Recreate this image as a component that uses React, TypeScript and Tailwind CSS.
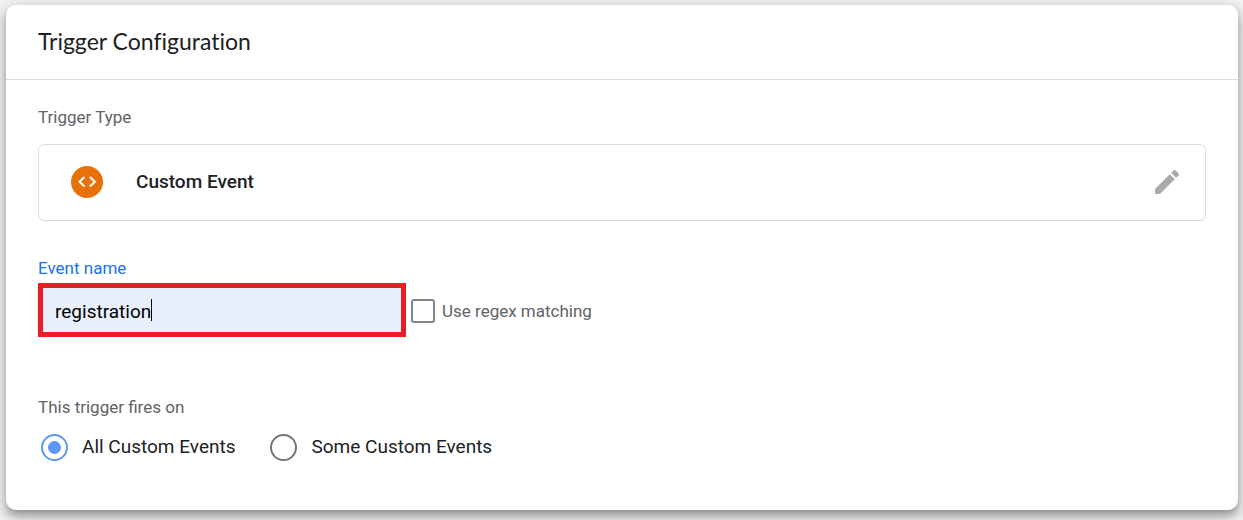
import React, { useState } from "react";

const CodeIcon: React.FC = () => (
  <svg viewBox="0 0 32 32" className="h-8 w-8 shrink-0" aria-hidden="true">
    <circle cx="16" cy="16" r="16" fill="#e8710a" />
    <path
      d="M13.5 11 8.5 15.8l5 4.8M18.9 11l5 4.8-5 4.8"
      fill="none"
      stroke="#fff"
      strokeWidth="2.1"
    />
  </svg>
);

const PencilIcon: React.FC = () => (
  <svg viewBox="3 3 18 18" className="h-6 w-6" fill="#aaaaaa" aria-hidden="true">
    <path d="M3 17.25V21h3.75L17.81 9.94l-3.75-3.75L3 17.25zM20.71 7.04a1 1 0 0 0 0-1.41l-2.34-2.34a1 1 0 0 0-1.41 0l-1.83 1.83 3.75 3.75 1.83-1.83z" />
  </svg>
);

const firingOptions = [
  { value: "all", label: "All Custom Events" },
  { value: "some", label: "Some Custom Events" },
];

const App: React.FC = () => {
  const [eventName, setEventName] = useState("registration");
  const [useRegex, setUseRegex] = useState(false);
  const [firesOn, setFiresOn] = useState("all");

  return (
    <div className="min-h-screen bg-[#f1f3f4] pt-[5px] pr-[5px] pb-[10px] pl-[6px] font-['Roboto',sans-serif] text-[#202124]">
      <main className="rounded-[10px] bg-white shadow-[0_5px_6px_-2px_rgba(0,0,0,0.2),0_8px_12px_1px_rgba(0,0,0,0.16),0_3px_14px_3px_rgba(0,0,0,0.14)]">
        <header className="border-b border-[#dadce0] px-8 pt-5 pb-[22px]">
          <h1 className="font-['Lato',sans-serif] text-[23px] leading-8 [font-variant-ligatures:none]">
            Trigger Configuration
          </h1>
        </header>

        <div className="px-8 pt-[25px] pb-[49px]">
          {/* Trigger type */}
          <h2 className="text-[17px] leading-6 text-[#5f6368]">Trigger Type</h2>
          <section className="mt-[15px] flex items-center rounded-md border border-[#dadce0] px-8 pt-[21px] pb-[22px]">
            <CodeIcon />
            <span className="ml-[33px] grow text-[19px] leading-8 font-medium">Custom Event</span>
            <button type="button" aria-label="Edit trigger type" className="-mr-[6px]">
              <PencilIcon />
            </button>
          </section>

          {/* Event name */}
          <label htmlFor="event-name" className="mt-[35px] block text-[17px] leading-6 text-[#1a73e8]">
            Event name
          </label>
          <div className="mt-[3px] flex items-center gap-[5px]">
            <div className="relative w-[368px]">
              <input
                id="event-name"
                type="text"
                value={eventName}
                onChange={(e) => setEventName(e.target.value)}
                className="block h-[54px] w-full border-[5px] border-[#ed1c24] bg-[#e8f0fe] px-3 pt-[2px] text-[19px] text-black outline-none"
              />
              {/* Text cursor */}
              <span className="pointer-events-none absolute inset-y-4 left-[17px] flex text-[19px]">
                <span className="invisible">{eventName}</span>
                <span className="w-px bg-black" />
              </span>
            </div>
            <label className="flex items-center gap-[7px] pt-[2px] text-[17px] leading-6 text-[#5f6368]">
              <input
                type="checkbox"
                checked={useRegex}
                onChange={(e) => setUseRegex(e.target.checked)}
                className="h-6 w-6 appearance-none rounded-[3px] border-2 border-[#80868b] checked:bg-[#5e97f6]"
              />
              Use regex matching
            </label>
          </div>

          {/* Firing condition */}
          <fieldset className="mt-[58px]">
            <legend className="text-[17px] leading-6 text-[#5f6368]">This trigger fires on</legend>
            <div className="mt-[14px] flex gap-[35px] pl-[3px]">
              {firingOptions.map((option) => (
                <label key={option.value} className="flex items-center gap-[14px] text-[19px] leading-7">
                  <input
                    type="radio"
                    name="fires-on"
                    value={option.value}
                    checked={firesOn === option.value}
                    onChange={() => setFiresOn(option.value)}
                    className="grid h-[27px] w-[27px] appearance-none place-items-center rounded-full border-2 border-[#757575] checked:border-[#5e97f6] checked:before:h-[13px] checked:before:w-[13px] checked:before:rounded-full checked:before:bg-[#5e97f6] checked:before:content-['']"
                  />
                  {option.label}
                </label>
              ))}
            </div>
          </fieldset>
        </div>
      </main>
    </div>
  );
};

export default App;
